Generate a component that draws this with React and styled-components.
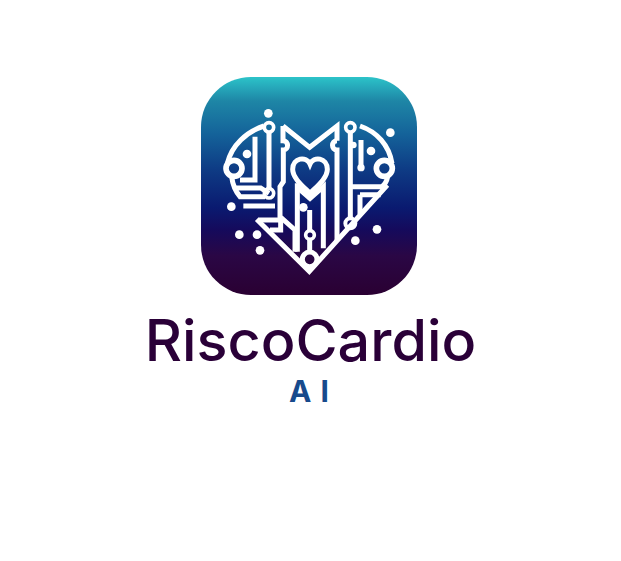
import styled, { createGlobalStyle } from 'styled-components';

const GlobalStyle = createGlobalStyle`
  html, body {
    margin: 0;
    padding: 0;
    background: #fff;
  }
`;

// Centered splash column
const Splash = styled.main`
  width: 621px;
  height: 561px;
  padding-top: 77px;
  box-sizing: border-box;
  display: flex;
  flex-direction: column;
  align-items: center;
  overflow: hidden;
`;

const AppIcon = styled.div`
  width: 216px;
  height: 218px;
  margin-left: -3px;
  border-radius: 50px;
  background: linear-gradient(180deg, #2cc3c9 0%, #1e86a6 11%, #14639a 26%, #0e3c85 42%, #0a1a70 60%, #150a5c 70%, #2a0745 82%, #2a0032 100%);
  overflow: hidden;
`;

const Mark = styled.svg`
  display: block;
  width: 100%;
  height: 100%;
`;

const Title = styled.h1`
  margin: 11px 0 0;
  font-family: Inter, "Liberation Sans", sans-serif;
  font-weight: 450;
  font-size: 57.5px;
  line-height: 68px;
  color: #2a0038;
  white-space: nowrap;
`;

const Subtitle = styled.div`
  margin: 0 0 0 6px;
  font-family: Inter, "Liberation Sans", sans-serif;
  font-weight: 700;
  font-size: 30px;
  line-height: 34px;
  letter-spacing: 9px;
  color: #174a8c;
`;

const traces = [
  // heart outline
  'M222 168C170 185 125 225 112 280',
  'M510 168C560 185 597 225 606 280',
  'M125 320C128 345 135 362 150 380L225 380',
  'M200 448L358 604L592 345',
  'M593 320C590 335 583 345 575 350L484 350',
  // left lobe
  'M195 200L195 330L150 330',
  'M132 354L212 354L237 370',
  'M237 185L237 358',
  // top V with hooks
  'M279 168L359 232L441 168L441 212',
  'M279 168L279 212C297 212 297 240 280 240L280 335L270 350L270 440L315 480L315 545',
  'M441 212C423 212 423 240 441 240L441 510',
  // under the small heart
  'M322 340L322 545',
  'M322 352L360 385L400 350L400 535',
  'M359 420L359 482',
  'M359 508L359 545',
  // right side
  'M481 185L481 448',
  'M513 210L513 293',
  'M510 374L510 432',
  'M510 374L572 374',
  // lower left bars
  'M160 408L255 408',
  'M205 450L272 450L272 480L240 480',
];

const dots = [
  [235, 130, 13], [601, 188, 13], [171, 252, 13], [543, 243, 13], [513, 293, 11], [490, 225, 10],
  [124, 410, 13], [340, 412, 13], [148, 494, 13], [201, 494, 13], [210, 541, 13], [496, 512, 13], [561, 478, 13],
];

const rings = [
  [237, 172, 14, 11], [481, 172, 14, 11], [132, 295, 24, 17], [583, 295, 24, 17],
  [359, 568, 22, 15], [360, 495, 13, 11], [237, 370, 14, 11], [481, 460, 15, 12],
];

function HeartMark() {
  return (
    <Mark viewBox="33 21 648 654">
      <g fill="none" stroke="#fff" strokeWidth="15">
        {traces.map((d) => <path key={d} d={d} />)}
        {rings.map(([cx, cy, r, w]) => <circle key={`${cx}-${cy}`} cx={cx} cy={cy} r={r} strokeWidth={w} />)}
        <path d="M360 370C340 350 308 325 308 298C308 262 350 258 360 282C370 258 412 262 412 298C412 325 380 350 360 370Z" strokeWidth="15" />
      </g>
      <g fill="#fff">
        {dots.map(([cx, cy, r]) => <circle key={`${cx}-${cy}`} cx={cx} cy={cy} r={r} />)}
      </g>
    </Mark>
  );
}

export default function App() {
  return (
    <>
      <GlobalStyle />
      <Splash>
        <AppIcon><HeartMark /></AppIcon>
        <Title>RiscoCardio</Title>
        <Subtitle>AI</Subtitle>
      </Splash>
    </>
  );
}
